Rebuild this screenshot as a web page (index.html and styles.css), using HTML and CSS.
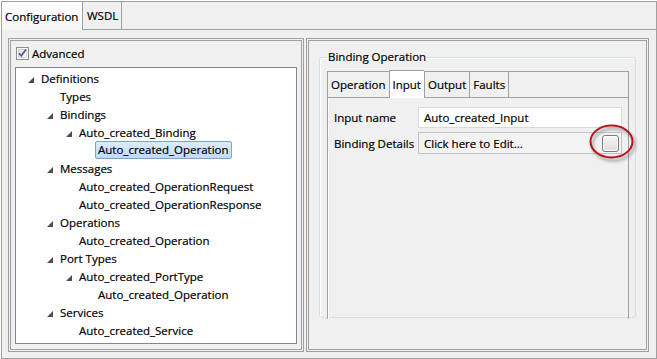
FILE: index.html
```html
<!DOCTYPE html>
<html lang="en">
  <head>
    <meta charset="UTF-8" />
    <title>WSDL Configuration</title>
    <link rel="stylesheet" href="styles.css">
  </head>
  <body>
    <div class="folder">
      <!-- outer tabs -->
      <div class="tabbar">
        <div class="tab active">Configuration</div>
        <div class="tab">WSDL</div>
        <div class="tabfill"></div>
      </div>
      <div class="folder-body">
        <!-- left pane : definition tree -->
        <div class="pane pane-left">
          <label class="check">
            <svg class="checkbox" width="13" height="13" viewBox="0 0 13 13">
              <defs>
                <linearGradient id="cbg" x1="0" y1="0" x2="1" y2="1">
                  <stop offset="0" stop-color="#dcdcdc" />
                  <stop offset="1" stop-color="#fbfbfb" />
                </linearGradient>
              </defs>
              <rect x="0.5" y="0.5" width="12" height="12" fill="#fff" stroke="#8e8f8f" />
              <rect x="2.5" y="2.5" width="8" height="8" fill="url(#cbg)" stroke="#c4c4c4" stroke-width="0.6" />
              <path d="M3 6.3 L5.2 8.8 L10 2.6" fill="none" stroke="#4a5f97" stroke-width="1.7" />
            </svg>
            Advanced
          </label>
          <ul class="tree">
            <li class="node l0"><span class="twisty"><svg width="6" height="6" viewBox="0 0 6 6"><polygon points="6,0 6,6 0,6" /></svg></span><span class="label">Definitions</span></li>
            <li class="node l1"><span class="twisty"></span><span class="label">Types</span></li>
            <li class="node l1"><span class="twisty"><svg width="6" height="6" viewBox="0 0 6 6"><polygon points="6,0 6,6 0,6" /></svg></span><span class="label">Bindings</span></li>
            <li class="node l2"><span class="twisty"><svg width="6" height="6" viewBox="0 0 6 6"><polygon points="6,0 6,6 0,6" /></svg></span><span class="label">Auto_created_Binding</span></li>
            <li class="node l3"><span class="twisty"></span><span class="label sel">Auto_created_Operation</span></li>
            <li class="node l1"><span class="twisty"><svg width="6" height="6" viewBox="0 0 6 6"><polygon points="6,0 6,6 0,6" /></svg></span><span class="label">Messages</span></li>
            <li class="node l2"><span class="twisty"></span><span class="label">Auto_created_OperationRequest</span></li>
            <li class="node l2"><span class="twisty"></span><span class="label">Auto_created_OperationResponse</span></li>
            <li class="node l1"><span class="twisty"><svg width="6" height="6" viewBox="0 0 6 6"><polygon points="6,0 6,6 0,6" /></svg></span><span class="label">Operations</span></li>
            <li class="node l2"><span class="twisty"></span><span class="label">Auto_created_Operation</span></li>
            <li class="node l1"><span class="twisty"><svg width="6" height="6" viewBox="0 0 6 6"><polygon points="6,0 6,6 0,6" /></svg></span><span class="label">Port Types</span></li>
            <li class="node l2"><span class="twisty"><svg width="6" height="6" viewBox="0 0 6 6"><polygon points="6,0 6,6 0,6" /></svg></span><span class="label">Auto_created_PortType</span></li>
            <li class="node l3"><span class="twisty"></span><span class="label">Auto_created_Operation</span></li>
            <li class="node l1"><span class="twisty"><svg width="6" height="6" viewBox="0 0 6 6"><polygon points="6,0 6,6 0,6" /></svg></span><span class="label">Services</span></li>
            <li class="node l2"><span class="twisty"></span><span class="label">Auto_created_Service</span></li>
          </ul>
        </div>
        <!-- right pane : binding operation details -->
        <div class="pane pane-right">
          <fieldset class="group">
            <legend>Binding Operation</legend>
            <div class="subfolder">
              <div class="subtabs">
                <div class="subtab">Operation</div>
                <div class="subtab active">Input</div>
                <div class="subtab">Output</div>
                <div class="subtab">Faults</div>
                <div class="subfill"></div>
              </div>
              <div class="subbody">
                <div class="form-row">
                  <span class="form-label">Input name</span>
                  <div class="field">Auto_created_Input</div>
                </div>
                <div class="form-row">
                  <span class="form-label">Binding Details</span>
                  <div class="field field-edit">
                    Click here to Edit...
                    <span class="edit-btn"></span>
                    <!-- red callout drawn over the button -->
                    <svg class="callout" width="56" height="46" viewBox="0 0 56 46">
                      <defs>
                        <filter id="sh" x="-30%" y="-30%" width="160%" height="170%">
                          <feGaussianBlur stdDeviation="1.6" />
                        </filter>
                      </defs>
                      <ellipse cx="26.5" cy="22.5" rx="21" ry="16" fill="none" stroke="#8a8a8a" stroke-width="2.5" filter="url(#sh)" opacity="0.7" />
                      <ellipse cx="24.5" cy="19.5" rx="21" ry="16" fill="none" stroke="#b8141c" stroke-width="2" />
                    </svg>
                  </div>
                </div>
              </div>
            </div>
          </fieldset>
        </div>
      </div>
    </div>
  </body>
</html>
```

FILE: styles.css
```css
body {
  margin: 0;
  background: #fff;
  font-family: "Open Sans", "Noto Sans", sans-serif;
  font-size: 11.5px;
  color: #000;
  -webkit-text-stroke: 0.2px #000;
}
.folder {
  margin: 1px 0 0 1px;
  width: 656px;
}
.tabbar {
  display: flex;
  height: 29px;
}
.tab {
  border: 1px solid #a0a0a0;
  border-right: none;
  background: #f0f0f0;
  padding: 0 3px;
  display: flex;
  align-items: center;
  box-sizing: border-box;
}
.tab.active {
  width: 81px;
  padding-left: 3px;
  border-bottom: none;
  background: linear-gradient(#fff, #f6f6f6);
}
.tab:nth-child(2) {
  width: 39px;
  padding-left: 4px;
}
.tabfill {
  flex: 1;
  border: 1px solid #a0a0a0;
  background: #f0f0f0;
}
.folder-body {
  display: flex;
  gap: 2px;
  height: 329px;
  box-sizing: border-box;
  padding: 8px 7px 6px 6px;
  border: 1px solid #a0a0a0;
  border-top: none;
  background: #f0f0f0;
}
.pane {
  border: 3px double #a0a0a0;
  box-sizing: border-box;
}
.pane-left {
  width: 296px;
  display: flex;
  flex-direction: column;
  padding: 3px 4px 5px 4px;
}
.pane-right {
  width: 343px;
  padding: 0 10px;
}
.check {
  display: flex;
  align-items: center;
  gap: 3px;
  height: 13px;
  margin: 3px 0 7px 1px;
}
.checkbox {
  display: block;
}
.tree {
  flex: 1;
  list-style: none;
  margin: 0;
  padding: 1px 0 0 0;
  background: #fff;
  border: 1px solid #828790;
}
.node {
  display: flex;
  align-items: center;
  height: 18px;
  padding-left: 12px;
  white-space: nowrap;
}
.node.l1 { padding-left: 31px; }
.node.l2 { padding-left: 50px; }
.node.l3 { padding-left: 69px; }
.twisty {
  width: 13px;
  height: 18px;
  flex: none;
}
.twisty svg {
  display: block;
  margin-top: 8px;
  fill: #4d4d4d;
}
.label.sel {
  margin-left: -3px;
  padding: 0 2px;
  line-height: 16px;
  border: 1px solid #7da2ce;
  border-radius: 2px;
  background: linear-gradient(#dcebfc, #c1dbfc);
}
.group {
  margin: 8px 0 0 0;
  height: 269px;
  box-sizing: border-box;
  padding: 5px 6px 0 7px;
  border: 1px solid #d5dfe5;
  border-radius: 3px;
  box-shadow: inset 1px 1px 0 #fff;
}
.group legend {
  padding: 0 1px;
  margin-left: 0;
  line-height: 16px;
}
.subfolder {
  height: 249px;
  display: flex;
  flex-direction: column;
}
.subtabs {
  display: flex;
  height: 28px;
}
.subtab {
  border: 1px solid #a0a0a0;
  border-right: none;
  background: #f0f0f0;
  padding: 0 3px;
  display: flex;
  align-items: center;
  margin-top: 1px;
}
.subtab.active {
  margin-top: 0;
  border-bottom: none;
  background: #fff;
  padding-bottom: 1px;
}
.subfill {
  flex: 1;
  margin-top: 1px;
  border: 1px solid #a0a0a0;
  background: #f0f0f0;
}
.subbody {
  flex: 1;
  border: 1px solid #a0a0a0;
  border-top: none;
  border-bottom: none;
  padding: 9px 6px 0 6px;
  box-shadow: inset 1px 0 0 #fff;
}
.form-row {
  display: flex;
  align-items: center;
  margin-bottom: 4px;
}
.form-label {
  width: 84px;
  flex: none;
}
.field {
  flex: 1;
  height: 21px;
  box-sizing: border-box;
  display: flex;
  align-items: center;
  padding-left: 5px;
  background: #fff;
  border: 1px solid #dadada;
}
.field-edit {
  position: relative;
  height: 22px;
  background: #f3f3f3;
  border-color: #c2c2c2;
  justify-content: space-between;
  padding-right: 2px;
}
.edit-btn {
  width: 17px;
  height: 17px;
  box-sizing: border-box;
  border: 1px solid #7a7a7a;
  border-radius: 3px;
  background: linear-gradient(#f6f6f6, #dedede);
  box-shadow: inset 0 0 0 1px #fdfdfd;
}
.callout {
  position: absolute;
  left: 168px;
  top: -11px;
  overflow: visible;
  -webkit-text-stroke: 0;
}
```
